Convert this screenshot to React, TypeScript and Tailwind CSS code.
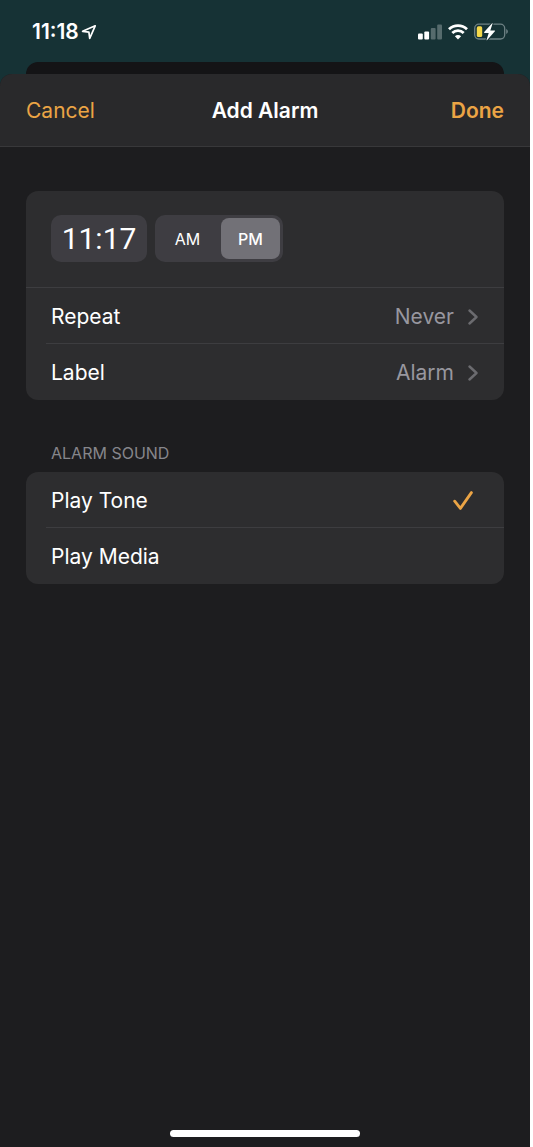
import { useState } from 'react';

const PERIODS = ['AM', 'PM'];
const SOUNDS = ['Play Tone', 'Play Media'];

const DETAILS = [
  ['Repeat', 'Never'],
  ['Label', 'Alarm']
];

function LocationIcon() {
  return (
    <svg className="h-4 w-4" viewBox="0 0 16 16" fill="none" stroke="white" strokeWidth="1.7" strokeLinejoin="round">
      <path d="M14.2 1.8 1.6 7.3 7.9 8.1 8.7 14.4Z" />
    </svg>
  );
}

function SignalIcon() {
  return (
    <svg className="h-4 w-6" viewBox="0 0 24 16" fill="white">
      <rect x="0" y="9.5" width="4.8" height="6" rx="1" />
      <rect x="6.3" y="7.5" width="4.8" height="8" rx="1" />
      <rect x="12.8" y="3.9" width="4.8" height="11.6" rx="1" opacity="0.28" />
      <rect x="19.2" y="0.5" width="4.8" height="15" rx="1" opacity="0.28" />
    </svg>
  );
}

function WifiIcon() {
  return (
    <svg className="h-4 w-5" viewBox="0 0 20 16" fill="none" stroke="white" strokeWidth="2.8">
      <path d="M1 5.2A13 13 0 0 1 19 5.2" />
      <path d="M4.3 8.9A8.2 8.2 0 0 1 15.7 8.9" />
      <path d="M10 15.5 6.9 12.3A4.4 4.4 0 0 1 13.1 12.3Z" fill="white" stroke="none" />
    </svg>
  );
}

function BatteryIcon() {
  return (
    <svg className="h-[18px] w-[35px]" viewBox="0 0 35 18">
      <rect x="0.7" y="1.2" width="30" height="14.8" rx="4.2" fill="none" stroke="#6f8285" strokeWidth="1.3" />
      <path d="M32.2 6.1v5q1.7-.8 1.7-2.5t-1.7-2.5Z" fill="#6f8285" />
      <rect x="2.8" y="3.3" width="5.4" height="10.8" rx="1.6" fill="#f5d94a" />
      <path
        d="M17.9.4 10.2 9q-.5.9.4.9h4.1l-2.1 6.8q-.2 1 .6.3l7.7-8.7q.5-.9-.4-.9h-4.2l2.2-6.7q.2-1-.6-.3Z"
        fill="white"
        stroke="#163235"
        strokeWidth="2"
        paintOrder="stroke"
      />
    </svg>
  );
}

function Chevron() {
  return (
    <svg className="h-4 w-[10px]" viewBox="0 0 10 16" fill="none" stroke="#6b6b6f" strokeWidth="2.4" strokeLinecap="round" strokeLinejoin="round">
      <path d="M1.5 1.5 8.5 8 1.5 14.5" />
    </svg>
  );
}

function Check() {
  return (
    <svg className="h-5 w-5" viewBox="0 0 20 20" fill="none" stroke="#eba445" strokeWidth="2.8" strokeLinecap="round" strokeLinejoin="round">
      <path d="M1.7 10.2 7.4 17.4 18.4 1.6" />
    </svg>
  );
}

export default function App() {
  const [time, setTime] = useState('11:17');
  const [period, setPeriod] = useState('PM');
  const [sound, setSound] = useState('Play Tone');

  return (
    <div className="min-h-screen bg-white pr-[3px] font-['Inter',sans-serif] text-white">
      <div className="flex min-h-screen flex-col bg-[#163235]">
        <div className="flex h-[62px] items-center justify-between pt-[2px] pr-[21px] pl-8">
          <div className="flex items-center gap-[2px]">
            <span className="text-[21px] font-semibold">11:18</span>
            <LocationIcon />
          </div>
          <div className="flex items-center gap-[6px]">
            <SignalIcon />
            <WifiIcon />
            <BatteryIcon />
          </div>
        </div>

        <div className="mx-[26px] h-3 rounded-t-2xl bg-[#141416]" />

        <main className="flex flex-1 flex-col overflow-hidden rounded-t-xl bg-[#1d1d1f]">
          <header className="grid h-[73px] grid-cols-[1fr_auto_1fr] items-center border-b border-[#38383a] bg-[#29292b] px-[26px] pt-[2px] text-[21px]">
            <button className="justify-self-start text-[#eba445]">Cancel</button>
            <h1 className="font-semibold">Add Alarm</h1>
            <button className="justify-self-end font-semibold text-[#eba445]">Done</button>
          </header>

          <section className="mx-[26px] mt-11 overflow-hidden rounded-xl bg-[#2d2d2f] text-[21px]">
            <div className="flex h-[97px] items-start gap-2 border-b border-[#3d3d40] px-[25px] pt-6">
              <input
                aria-label="Time"
                className="h-[47px] w-24 rounded-[10px] bg-[#3e3d42] text-center font-['Roboto',sans-serif] text-[30px]"
                value={time}
                onChange={(e) => setTime(e.target.value)}
              />
              <div role="radiogroup" aria-label="Period" className="flex h-[47px] w-32 gap-1 rounded-[10px] bg-[#3e3d42] p-[3px]">
                {PERIODS.map((p) => (
                  <label
                    key={p}
                    className="flex flex-1 items-center justify-center rounded-lg text-base has-checked:bg-[#727177] has-checked:font-medium"
                  >
                    <input
                      type="radio"
                      name="period"
                      className="sr-only"
                      checked={period === p}
                      onChange={() => setPeriod(p)}
                    />
                    {p}
                  </label>
                ))}
              </div>
            </div>
            <div className="divide-y divide-[#3d3d40] pl-5">
              {DETAILS.map(([label, value]) => (
                <button key={label} className="flex h-14 w-full items-center pt-[2px] pr-[26px] pl-[5px]">
                  <span>{label}</span>
                  <span className="mr-[14px] ml-auto text-[#98979f]">{value}</span>
                  <Chevron />
                </button>
              ))}
            </div>
          </section>

          <section className="mx-[26px] mt-[41px]">
            <h2 className="mb-[7px] px-[25px] text-base text-[#86868b]">ALARM SOUND</h2>
            <div className="divide-y divide-[#3d3d40] rounded-xl bg-[#2d2d2f] pl-5 text-[21px]">
              {SOUNDS.map((s) => (
                <label key={s} className="flex h-14 items-center justify-between pt-[2px] pr-[31px] pl-[5px]">
                  <input
                    type="radio"
                    name="sound"
                    className="sr-only"
                    checked={sound === s}
                    onChange={() => setSound(s)}
                  />
                  <span>{s}</span>
                  {sound === s && <Check />}
                </label>
              ))}
            </div>
          </section>

          <div className="mx-auto mt-auto mb-[10px] h-[7px] w-[190px] rounded-full bg-white" />
        </main>
      </div>
    </div>
  );
}
